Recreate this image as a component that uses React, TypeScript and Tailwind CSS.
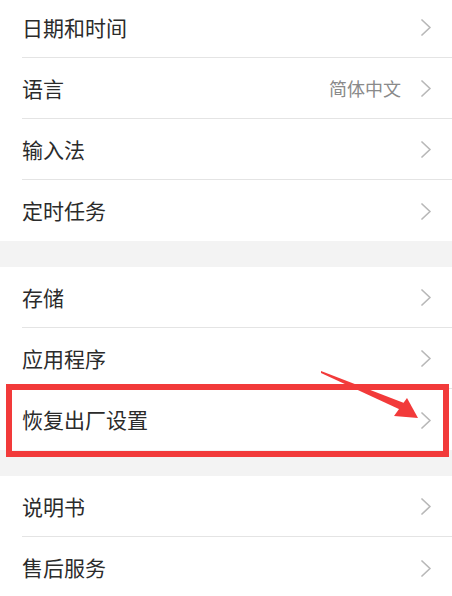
type Item = { label: string; value?: string };

const groups: Item[][] = [
  [{ label: "日期和时间" }, { label: "语言", value: "简体中文" }, { label: "输入法" }, { label: "定时任务" }],
  [{ label: "存储" }, { label: "应用程序" }, { label: "恢复出厂设置" }],
  [{ label: "说明书" }, { label: "售后服务" }],
];

function Chevron() {
  return (
    <svg width="12" height="18" viewBox="0 0 12 18" className="text-[#b8b8b8]">
      <polyline points="2,2 10,9.5 2,17" fill="none" stroke="currentColor" strokeWidth="1.7" strokeLinecap="round" strokeLinejoin="round" />
    </svg>
  );
}

function Row({ item, last }: { item: Item; last: boolean }) {
  return (
    <div className="flex h-[61px] items-stretch bg-white pl-[22px]">
      <div
        className={`flex flex-1 items-center pr-[20px] ${last ? "" : "border-b border-[#e4e4e4]"}`}
      >
        <span className="flex-1 text-[21px] leading-none text-[#2b2b2b]">{item.label}</span>
        {item.value && (
          <span className="mr-[19px] text-[18px] leading-none text-[#8a8a8a]">{item.value}</span>
        )}
        <Chevron />
      </div>
    </div>
  );
}

export default function App() {
  return (
    <div
      className="relative h-[596px] w-[452px] overflow-hidden bg-[#f3f3f3]"
      style={{ fontFamily: '"Noto Sans CJK SC", "Noto Sans", sans-serif' }}
    >
      <div className="-mt-[3px] flex flex-col gap-[26px]">
        {groups.map((group, gi) => (
          <div key={gi} className="flex flex-col">
            {group.map((item, i) => (
              <Row key={item.label} item={item} last={i === group.length - 1} />
            ))}
          </div>
        ))}
      </div>

      {/* highlight box + arrow */}
      <div className="pointer-events-none absolute left-[6px] top-[384px] h-[73px] w-[443px] border-[6px] border-[#f23a3a]" />
      <svg className="pointer-events-none absolute left-0 top-0" width="452" height="596" viewBox="0 0 452 596">
        <polygon points="321,371 404,403 401,410 321,373" fill="#f23a3a" />
        <polygon points="407,398 394,416 418,418" fill="#f23a3a" />
      </svg>
    </div>
  );
}
